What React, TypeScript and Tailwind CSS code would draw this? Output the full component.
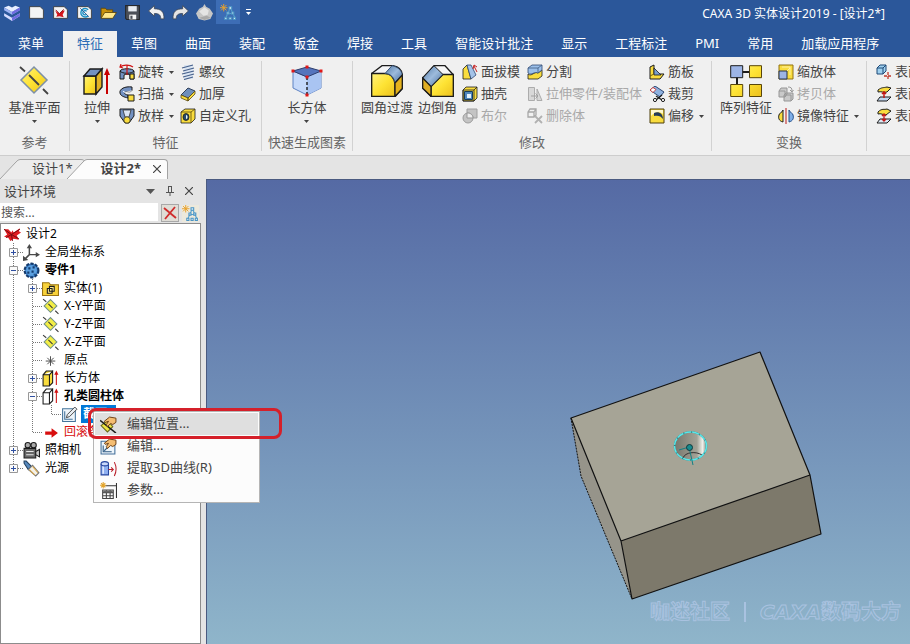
import type { ReactNode } from 'react'

interface IconProps {
  size?: number
  box?: number
  children: ReactNode
}

function Icon({ size = 17, box = 16, children }: IconProps) {
  return (
    <svg width={size} height={size} viewBox={`0 0 ${box} ${box}`} fill="none" className="shrink-0" aria-hidden="true">
      {children}
    </svg>
  )
}

const K = '#1c1c1c'
const Y = '#f9dc3e'
const B = '#7391c2'

function Caret({ dim = false }: { dim?: boolean }) {
  return (
    <svg width="5" height="3" viewBox="0 0 5 3" className="shrink-0" aria-hidden="true">
      <path d="M0 0h5L2.500 3z" fill={dim ? '#fff' : '#444'} />
    </svg>
  )
}

/* ---------- quick access icons ---------- */

const Page = () => <path d="M1.500 2.500h10l3 3v8h-13z" fill="#f4f4f4" stroke="#3b3b3b" strokeWidth=".8" />

const HierarchyShape = () => (
  <>
    <path d="M9.500 4L5.500 13M10 4l4 9M7.500 9h4.500" stroke="#56a0cc" />
    <path d="M8.500 2.500h2.500v2.500H8.500zM6.500 7.500h2v2h-2zM11 7.500h2v2h-2zM4.500 12.500h2v2h-2zM8.500 12.500h2v2h-2zM12.500 12.500h2v2h-2z" fill="#e3f2f9" stroke="#4a94c4" />
    <path d="M3.500 0v7M0 3.500h7M1 1l5 5M6 1L1 6" stroke="#e8a22c" strokeWidth=".9" />
  </>
)

const quickTools: { name: string; active?: boolean; icon: ReactNode }[] = [
  { name: '新建', icon: <Page /> },
  {
    name: '新建设计',
    icon: (
      <>
        <Page />
        <path d="M3 6l4 3 3-3 2 0-2 4 1 2.500-4-1-3 .5 1-2z" fill="#d3141b" />
        <path d="M3.500 5.500L7 9l4-4" stroke="#8d0e12" strokeWidth=".8" />
      </>
    ),
  },
  {
    name: '新建图纸',
    icon: (
      <>
        <Page />
        <path d="M11.500 5.500a4 4 0 1 0 0 5.500M10 7a2 2 0 1 0 0 2.500" stroke="#1b8fc4" strokeWidth="1.300" />
        <path d="M4 4l8 8" stroke="#2f5f97" strokeWidth=".9" />
      </>
    ),
  },
  {
    name: '打开',
    icon: (
      <>
        <path d="M1 13V4h4l1.500 1.500H12V8" fill="#c9920c" stroke="#5d4407" strokeWidth=".8" />
        <path d="M1 13.500L4.500 8h11L12 13.500z" fill="#ffe88a" stroke="#5d4407" strokeWidth=".8" />
      </>
    ),
  },
  {
    name: '保存',
    icon: (
      <>
        <path d="M1.500 1.500h13v13h-12l-1-1z" fill="#4b4f57" stroke="#26282c" />
        <path d="M4 2h8v5H4z" fill="#e9edf2" />
        <path d="M5 10h6.500v4.500H5z" fill="#f5f5f5" />
        <path d="M6 11h2v3H6z" fill="#4b4f57" />
      </>
    ),
  },
  {
    name: '撤销',
    icon: <path d="M.5 6.500L6 1.500v3c6 0 9.500 2.500 9 9.500h-3c0-3.500-1.500-5-6-5v2.500z" fill="#f1f1f1" stroke="#3b4656" strokeWidth=".8" />,
  },
  {
    name: '重做',
    icon: <path d="M15.500 6.500L10 1.500v3C4 4.500.5 7 1 14h3c0-3.500 1.500-5 6-5v2.500z" fill="#e4e4e4" stroke="#3b4656" strokeWidth=".8" />,
  },
  {
    name: '渲染',
    icon: (
      <>
        <path d="M8 0l1.500 2.500L13 4.500l3 4.500-2.500 5L8 15.500 2.500 14 0 9l3-4.500 3.500-2z" fill="#c6c6c6" />
        <path d="M8 3l4 3-1 4-4 1-4-4z" fill="#e4e4e4" />
        <path d="M10 11l4 2-6 2-5-2z" fill="#a9a9a9" />
      </>
    ),
  },
  { name: '设计树', active: true, icon: <HierarchyShape /> },
]

/* ---------- ribbon icons ---------- */

const PlaneShape = () => (
  <>
    <path d="M16 2l13 13-13 13L3 15z" fill="url(#gold)" stroke="#7d90a8" strokeWidth="1.500" />
    <path d="M2 2l5 4.500M11 10l10 10M25 24l5 5" stroke="#444" strokeWidth="1.800" />
  </>
)

const ExtrudeShape = () => (
  <>
    <path d="M3 11h12v18H3z" fill="url(#gold)" stroke={K} strokeWidth="1.400" />
    <path d="M3 11l6-7h12l-6 7z" fill={B} stroke={K} strokeWidth="1.400" />
    <path d="M15 11l6-7v18l-6 7z" fill="#e2b224" stroke={K} strokeWidth="1.400" />
    <path d="M26 29V8" stroke="#c80000" strokeWidth="2" />
    <path d="M26 3l3 7h-6z" fill="#c80000" />
  </>
)

const CubeShape = () => (
  <>
    <path d="M2 6v17l14 7 14-7V6l-14 6z" fill="#c5d9fa" stroke="#5f83c3" />
    <path d="M16 12l14-6v17l-14 7z" fill="#a9c4f2" />
    <path d="M2 6l14-4 14 4-14 6z" fill="#5574bd" stroke="#2d3e6e" />
    <path d="M16 12v18" stroke={K} strokeDasharray="3 2" strokeWidth="1.400" />
    <path d="M14.500 .5h3v3h-3zM.5 4.500h3v3h-3zM28.500 4.500h3v3h-3zM14.500 10.500h3v3h-3zM14.500 28.500h3v3h-3z" fill="#e01818" />
  </>
)

const FilletShape = () => (
  <>
    <path d="M.7 8.500L11 .7h11c5 1 9 4 9.300 9v14l-7 7.600H.7z" fill="#f4f5f7" stroke={K} strokeWidth="1.300" />
    <path d="M.7 8.500H14c6 0 9 5 10 10v13H.7z" fill="url(#gold)" stroke={K} strokeWidth="1.300" />
    <path d="M14 8.500L21 .7c6 1 9.500 5 10.300 9l-7.300 8C23 13 20 8.500 14 8.500z" fill="url(#steel)" stroke="#354f72" />
    <path d="M24 18l7.300-8v13.500l-7.300 8z" fill="#e4b21d" stroke={K} strokeWidth="1.300" />
  </>
)

const ChamferShape = () => (
  <>
    <path d="M.7 13L12 .7h11l8.300 9v21.600H9l-8.300-8z" fill="#f6f6f6" stroke={K} strokeWidth="1.300" />
    <path d="M9 21.500l12-12h10.300v21.800H9z" fill="url(#gold)" stroke={K} strokeWidth="1.300" />
    <path d="M.7 13L12 .7l9 8.800-12 12z" fill="url(#steel)" stroke={K} />
    <path d="M.7 13l8.300 8.500v9.800l-8.300-8z" fill="#dfae24" stroke={K} strokeWidth="1.300" />
  </>
)

const PatternShape = () => (
  <>
    <path d="M7 7h18M7 7v18" stroke={K} strokeWidth="2" />
    <path d="M.7 .7h12v12H.7z" fill="#9db5e6" stroke={K} />
    <path d="M19.500 .7h12v12h-12zM.7 19.500h12v12H.7zM19.500 19.500h12v12h-12z" fill="url(#gold)" stroke="#57450b" />
  </>
)

const small: Record<string, ReactNode> = {
  revolve: (
    <>
      <path d="M1 7c1-3 13-3 14 0v8h-4v-4c-1-1-5-1-6 0v4H1z" fill={B} stroke={K} />
      <path d="M1 7c2 3 12 3 14 0" stroke={K} />
      <path d="M11 10h4v5h-4z" fill={Y} stroke={K} />
      <path d="M14 3C10 0 4 1 1 3m1-3L1 3l3 1M8 1v10" stroke="#d01414" strokeWidth="1.200" />
    </>
  ),
  sweep: (
    <>
      <path d="M13 1C6 0 0 3 1 7c.5 3 4 4 8 5V9C6 8.500 5 7.500 6 6.500 7 5 13 7 13 4z" fill={B} stroke={K} />
      <path d="M4 5c2 3 6 0 9 0" stroke="#fff" />
      <path d="M9 9h6v6H9z" fill={Y} stroke={K} />
    </>
  ),
  loft: (
    <>
      <path d="M1 1h14v7l-5 7H6L1 8z" fill={B} stroke={K} />
      <path d="M4 2h8l-2 7H6z" fill="#dbe5f4" stroke={K} strokeWidth=".7" />
      <circle cx="8" cy="12" r="3.200" fill={Y} stroke={K} strokeWidth=".7" />
    </>
  ),
  thread: (
    <>
      <path d="M4 1h9v14H4z" fill="#dbe5f2" />
      <path d="M2 4l11-3M3 7l11-3M2 10l12-3M3 13l11-3M4 15.500l9-2.500" stroke="#46608a" strokeWidth="1.200" />
    </>
  ),
  thicken: (
    <>
      <path d="M1 9l7-7 7 3-7 7z" fill="#6e8ebb" stroke="#303f59" />
      <path d="M1 9l7 3v3l-7-3zM8 12l7-7v3l-7 7z" fill={Y} stroke="#5a4a12" strokeWidth=".8" />
    </>
  ),
  hole: (
    <>
      <path d="M1 4l4-3h10v10l-4 4H1z" fill={Y} stroke={K} strokeWidth=".8" />
      <path d="M1 4h10v11M11 4l4-3" stroke="#59470a" strokeWidth=".8" />
      <ellipse cx="6" cy="9" rx="3" ry="3.500" fill="#274969" stroke={K} strokeWidth=".8" />
      <path d="M6 7c2 0 2 4 0 4" fill="#e8f4f8" />
    </>
  ),
  draft: (
    <>
      <path d="M1 5l4-4 4 14H1z" fill={Y} stroke={K} strokeWidth=".8" />
      <path d="M5 1h4l5 10-5 4z" fill="#a4c3e8" stroke="#2d4772" strokeWidth=".8" />
      <path d="M15 8l-3-6m-1 3l1-4 3 2" stroke="#c62020" />
    </>
  ),
  shell: (
    <>
      <path d="M1 4l3-3h11v11l-3 3H1z" fill={Y} stroke={K} strokeWidth=".8" />
      <path d="M1 4h11v11H1zM12 4l3-3" stroke={K} strokeWidth=".8" />
      <path d="M2.500 5.500h8v8h-8z" fill="#4f87bc" stroke="#173a5c" />
      <path d="M5 8h4v4H5z" fill="#e4f0fa" />
    </>
  ),
  boolean: (
    <>
      <path d="M5 1h10v9H5z" fill="#c4c4c4" stroke="#a0a0a0" />
      <circle cx="6" cy="10" r="5" fill="#c4c4c4" stroke="#9c9c9c" />
      <path d="M5 5c4 0 6 2 6 5H5z" fill="#eee" stroke="#999" />
    </>
  ),
  split: (
    <>
      <path d="M1 10c4 3 6-3 10-1l4-3v6l-4 3H1z" fill={Y} stroke={K} strokeWidth=".8" />
      <path d="M1 4l4-3h10v5l-4 3C7 7 5 12 1 9z" fill="#9cc0ea" stroke="#2d4772" strokeWidth=".8" />
      <path d="M1 4h10l4-3M11 4v4" stroke="#405c82" strokeWidth=".8" />
    </>
  ),
  stretch: (
    <>
      <path d="M1.500 1.500h6v13h-6zM10 3l5 11.500h-5z" fill="#d8d8d8" stroke="#acacac" />
      <path d="M4 10h7M8.500 7.500L11 10l-2.500 2.500" stroke="#a0a0a0" />
    </>
  ),
  remove: (
    <>
      <path d="M1 4l2-3h6v6L7 9H1zM1 4h6v5M7 4l2-3" stroke="#a7a7a7" strokeWidth="1.300" />
      <path d="M8 8l7 7M15 8l-7 7" stroke="#b1b1b1" strokeWidth="1.800" />
    </>
  ),
  rib: (
    <>
      <path d="M1 3l4-2v9h10l-4 5H1z" fill={Y} stroke={K} />
      <path d="M5 4l7 7H5z" fill="#799ecd" stroke={K} strokeWidth=".8" />
      <path d="M1 12l4-2" stroke="#77620e" />
    </>
  ),
  trim: (
    <>
      <path d="M1 4l5-4 9 6-4 5z" fill="#8eb1df" stroke="#2d4772" />
      <path d="M1 4l3-2.500 3 2-3 3z" fill="#fff" stroke="#c84444" />
      <path d="M7 10l6 4M13 9l-6 5" stroke={K} strokeWidth="1.300" />
      <circle cx="6" cy="14" r="1.600" fill="#fff" stroke={K} />
      <circle cx="14" cy="14" r="1.600" fill="#fff" stroke={K} />
    </>
  ),
  offset: (
    <>
      <path d="M1 1h14v14H1z" fill={Y} stroke="#4c3f0c" />
      <path d="M2 8V2h12v4C11 3 5 4 2 8z" fill="#fff8d0" />
      <path d="M5 5c5-2 9 1 9 6-2-3-5-4-9-3z" fill="#253b58" />
    </>
  ),
  scale: (
    <>
      <path d="M1 1h14v14H1z" fill={Y} stroke="#927310" />
      <path d="M1 7h8v8H1z" fill="#9db4e3" stroke="#25334d" />
      <path d="M9 7l3-3M4 3h8v8" stroke="#fff0a0" />
    </>
  ),
  copy: (
    <>
      <path d="M1 5l2-3h6v6l-2 3H1zM6 9l2-2h7v6l-2 2H6z" fill="#c9c9c9" stroke="#969696" />
      <path d="M1 5h6v6M6 9h7v6M10 1c3 0 4 1 4 4m-2-1l2 2 1.500-2" stroke="#989898" />
    </>
  ),
  mirror: (
    <>
      <path d="M5 2v12c-4-1-5-4-4-7 0-2 3-2 4-5z" fill={Y} stroke={K} />
      <path d="M11 2v12c4-1 5-4 4-7 0-2-3-2-4-5z" fill="#80afe8" stroke="#24508a" />
      <path d="M8 0v16" stroke="#b91a1a" />
    </>
  ),
  moveFace: (
    <>
      <path d="M1 4l3-3h6v6l-3 3H1z" fill="#9fd0ef" stroke="#1c4977" />
      <path d="M1 4h6v6M7 4l3-3" stroke="#1c4977" />
      <path d="M12 8v8M8 12h8" stroke="#c0392b" strokeDasharray="3 1" strokeWidth="1.300" />
    </>
  ),
  matchFace: (
    <>
      <path d="M2 4c4-3 5-2 9-3l4 1-4 4c-3 1-6-1-9 0z" fill={Y} stroke={K} />
      <path d="M4 11h11l-4 4H1z" fill="#c0d6ef" stroke={K} />
      <path d="M8 5v7M6 8l2-2 2 2" stroke="#c21616" strokeWidth="1.500" />
    </>
  ),
  alignFace: (
    <>
      <path d="M2 4c4-4 6-2 9-3l4 2-5 4c-3 0-5-2-8-1z" fill={Y} stroke={K} />
      <path d="M4 11h11l-4 4H1z" fill="#dce8f4" stroke={K} />
      <path d="M8 6v6M6 8l2-2 2 2M6 11l2 2 2-2" stroke="#c21616" strokeWidth="1.300" />
    </>
  ),
}

/* ---------- tree and menu icons ---------- */

const Extrude16 = ({ fill }: { fill: string }) => (
  <>
    <path d="M1 4.500h6v10.500H1zM7 4.500L10 1v11l-3 3M1 4.500L4 1h6" fill={fill} stroke={K} />
    <path d="M13.500 14V3" stroke="#cf1010" />
    <path d="M13.500 .5l2 4h-4z" fill="#cf1010" />
  </>
)

const Plane16 = () => (
  <>
    <path d="M8 1.500l6 6-6 6-6-6z" fill="#f3ee45" stroke="#71918a" />
    <path d="M1 1l3 2.500M6 5.500l4 4M12.500 12l3 3" stroke="#3c3c3c" />
  </>
)

const Hand = () => (
  <path d="M4 5l5-4 6 1v4l-3 2-2-1-3 3-1-2 2-3-3 1z" fill="#f4bd72" stroke="#6b3d12" strokeWidth=".9" />
)

const treeIcons: Record<string, ReactNode> = {
  design: (
    <>
      <path d="M0 3l4 0 3 3 1-2 1 2 6-4-1 3 2 1-4 3 2 4-5-1-3 2-2-3-4-1 3-2z" fill="#e01b20" />
      <path d="M0 3l7 5 8-5M7 8l1 6M2 11l5-3 7 4" stroke="#720c10" strokeWidth=".9" />
    </>
  ),
  axes: (
    <>
      <path d="M6 3v7h8M6 10l-4 4" stroke="#4a4a4a" strokeWidth="1.400" />
      <path d="M6 0l2.500 4h-5zM16 10l-4 2.500v-5zM0 16v-5l5 4z" fill="#4a4a4a" />
    </>
  ),
  part: (
    <>
      <circle cx="8" cy="8" r="6.500" fill="#3d82cb" stroke="#163b6c" strokeWidth="2" strokeDasharray="3 1.200" />
      <circle cx="8" cy="8" r="5" fill="#5ca0df" />
      <path d="M5 5h2v2H5zM9 4h2v2H9zM8 8h2v2H8zM4 9h2v2H4zM10 11h2v1h-2z" fill="#153e73" />
    </>
  ),
  folder: (
    <>
      <path d="M.5 14.500v-12h6l1.500 2h7.500v10z" fill="#f8d23a" stroke="#9b7412" />
      <path d="M5 8h4.500v4.500H5zM7 6h4.500v4.500H7z" fill="#fbe88a" stroke={K} />
    </>
  ),
  plane: <Plane16 />,
  origin: <path d="M8 4v9M3.500 8.500h9M5 5.500l6 6M11 5.500l-6 6" stroke="#4a4a4a" strokeWidth=".9" />,
  solid: <Extrude16 fill={Y} />,
  cavity: <Extrude16 fill="#fff" />,
  sketch: (
    <>
      <path d="M1.500 2.500h12v12h-12z" fill="#eef5fb" stroke="#44749b" />
      <path d="M3.500 5v7.500H11" stroke="#44749b" />
      <path d="M5 11l1-3 7-7 2 2-7 7z" fill="#e8eef2" stroke="#444" strokeWidth=".9" />
    </>
  ),
  arrow: <path d="M3 7h6V4l6 4.500L9 13v-3H3z" fill="#d80e0e" />,
  camera: (
    <>
      <circle cx="4.500" cy="3" r="2.500" fill="#aaa" stroke={K} />
      <circle cx="10" cy="3" r="2.500" fill="#aaa" stroke={K} />
      <path d="M1 6h11v9H1z" fill="#666" stroke={K} />
      <path d="M3 9h7M3 12h7" stroke="#e8e8e8" />
      <path d="M12 9l3.500-2v7L12 12z" fill="#ccc" stroke={K} />
    </>
  ),
  light: (
    <>
      <path d="M1 1h2l5 5-3 3-4-6z" fill="#5889bd" stroke="#23415f" />
      <path d="M5 9l4-4 6 7-3 3z" fill="#f4f2ea" stroke="#777" />
      <path d="M9 6l5 6M6 9l5 5" stroke="#d9a84d" />
    </>
  ),
  editPosition: (
    <>
      <path d="M1 9l6-5 5 6-5 5z" fill="#eee543" stroke="#6b671b" />
      <path d="M0 4l15 12" stroke={K} strokeWidth="1.500" />
      <Hand />
    </>
  ),
  edit: (
    <>
      <path d="M1 3h13v12H1z" fill="#edf5fb" stroke="#426f9a" />
      <path d="M3 7v6h8M4 12l5-5" stroke="#2f5a83" />
      <Hand />
    </>
  ),
  curve: (
    <>
      <path d="M1 4v10h7V4z" fill="#8fb0f0" stroke="#2747a0" />
      <path d="M3 5v8" stroke="#dfe8ff" strokeWidth="1.500" />
      <ellipse cx="4.500" cy="3.500" rx="3.500" ry="2" fill="#c9d8fa" stroke="#2747a0" />
      <path d="M8 9h4M10.500 7l2 2-2 2M13.500 2c2 4 2 9 0 13" stroke="#b91f2a" />
    </>
  ),
  params: (
    <>
      <path d="M2.500 7.500h10v8h-10zM2.500 10h10M6 8v7M9.500 8v7M2.500 13h10" stroke="#444" />
      <path d="M3 8h9v2H3z" fill="#666" />
      <path d="M5 3.500h10M15.500 1v14" stroke="#333" />
      <path d="M3 0v6M0 3h6M1 1l4 4M5 1L1 5" stroke="#e3a42b" />
    </>
  ),
}

/* ---------- ribbon ---------- */

interface Tool {
  label: string
  icon: string
  menu?: boolean
  disabled?: boolean
}

function SmallTool({ label, icon, menu, disabled }: Tool) {
  return (
    <button
      type="button"
      disabled={disabled}
      className="flex h-[22px] items-center gap-[3px] whitespace-nowrap text-[#444] disabled:text-[#a9a9a9]"
    >
      <Icon size={16}>{small[icon]}</Icon>
      <span>{label}</span>
      {menu && <span className="pl-0.5"><Caret /></span>}
    </button>
  )
}

function ToolColumn({ tools }: { tools: Tool[] }) {
  return (
    <div className="flex shrink-0 flex-col items-start">
      {tools.map((t) => (
        <SmallTool key={t.label} {...t} />
      ))}
    </div>
  )
}

function LargeTool({ label, menu, children }: { label: string; menu?: boolean; children: ReactNode }) {
  return (
    <button type="button" className="flex shrink-0 flex-col items-center pt-1 whitespace-nowrap">
      <Icon size={32} box={32}>{children}</Icon>
      <span className="pt-px leading-[18px]">{label}</span>
      {menu && <span className="pt-1"><Caret /></span>}
    </button>
  )
}

function Group({ title, className, children }: { title?: string; className: string; children: ReactNode }) {
  return (
    <section className={`my-1 flex shrink-0 flex-col border-r border-[#d2d2d2] ${className}`}>
      <div className="flex h-[72px] items-start">{children}</div>
      <h2 className="text-center leading-[18px] text-[#666]">{title}</h2>
    </section>
  )
}

function Ribbon() {
  return (
    <div className="flex h-[99px] shrink-0 overflow-hidden border-b border-[#cdcdcd] bg-[#f0f0f0] text-[13px] text-[#444]">
      <Group title="参考" className="w-[70px]">
        <div className="flex w-full justify-center">
          <LargeTool label="基准平面" menu><PlaneShape /></LargeTool>
        </div>
      </Group>
      <Group title="特征" className="w-48">
        <div className="flex gap-1.5 pl-[11px]">
          <LargeTool label="拉伸" menu><ExtrudeShape /></LargeTool>
          <ToolColumn
            tools={[
              { label: '旋转', icon: 'revolve', menu: true },
              { label: '扫描', icon: 'sweep', menu: true },
              { label: '放样', icon: 'loft', menu: true },
            ]}
          />
          <ToolColumn
            tools={[
              { label: '螺纹', icon: 'thread' },
              { label: '加厚', icon: 'thicken' },
              { label: '自定义孔', icon: 'hole' },
            ]}
          />
        </div>
      </Group>
      <Group title="快速生成图素" className="w-[91px]">
        <div className="flex w-full justify-center">
          <LargeTool label="长方体" menu><CubeShape /></LargeTool>
        </div>
      </Group>
      <Group title="修改" className="w-[359px]">
        <div className="flex gap-[5px] pl-2">
          <LargeTool label="圆角过渡"><FilletShape /></LargeTool>
          <LargeTool label="边倒角"><ChamferShape /></LargeTool>
          <div className="flex gap-[7px]">
            <ToolColumn
              tools={[
                { label: '面拔模', icon: 'draft' },
                { label: '抽壳', icon: 'shell' },
                { label: '布尔', icon: 'boolean', disabled: true },
              ]}
            />
            <ToolColumn
              tools={[
                { label: '分割', icon: 'split' },
                { label: '拉伸零件/装配体', icon: 'stretch', disabled: true },
                { label: '删除体', icon: 'remove', disabled: true },
              ]}
            />
            <ToolColumn
              tools={[
                { label: '筋板', icon: 'rib' },
                { label: '裁剪', icon: 'trim' },
                { label: '偏移', icon: 'offset', menu: true },
              ]}
            />
          </div>
        </div>
      </Group>
      <Group title="变换" className="w-[155px]">
        <div className="flex gap-1.5 pl-2">
          <LargeTool label="阵列特征"><PatternShape /></LargeTool>
          <ToolColumn
            tools={[
              { label: '缩放体', icon: 'scale' },
              { label: '拷贝体', icon: 'copy', disabled: true },
              { label: '镜像特征', icon: 'mirror', menu: true },
            ]}
          />
        </div>
      </Group>
      <Group className="w-40 pl-[9px]">
        <ToolColumn
          tools={[
            { label: '表面移动', icon: 'moveFace' },
            { label: '表面匹配', icon: 'matchFace' },
            { label: '表面等距', icon: 'alignFace' },
          ]}
        />
      </Group>
    </div>
  )
}

const menuTabs = ['菜单', '特征', '草图', '曲面', '装配', '钣金', '焊接', '工具', '智能设计批注', '显示', '工程标注', 'PMI', '常用', '加载应用程序']

function TitleBar() {
  return (
    <header className="shrink-0 bg-[#2b579a] text-[13px] text-white">
      <div className="flex h-[31px] items-start justify-between">
        <div className="flex items-center">
          <span className="flex w-6 justify-center">
            <Icon size={18}>
              <path d="M1 4l7 4 7-4-4-1.500L8 4 5 2.500z" fill="#e9efff" />
              <path d="M1 4v2.500l7 4 7-4V4L8 8z" fill="#9fb4f4" />
              <path d="M1 9v2.500L8 16l7-4.500V9l-7 4z" fill="#d5dcff" />
              <path d="M8 8v2.500l7-4V4zM8 13v3l7-4.500V9z" fill="#6f6be0" />
            </Icon>
          </span>
          {quickTools.map((t) => (
            <button
              key={t.name}
              type="button"
              aria-label={t.name}
              className={`flex h-6 w-6 items-center justify-center ${t.active ? 'bg-[#3d6db5]' : ''}`}
            >
              <Icon>{t.icon}</Icon>
            </button>
          ))}
          <button type="button" aria-label="自定义快速访问工具栏" className="flex flex-col items-center gap-0.5 px-1.5">
            <span className="h-px w-[5px] bg-white" />
            <Caret dim />
          </button>
        </div>
        <h1 className="pt-1 pr-[25px] text-[12px] leading-5">CAXA 3D 实体设计2019 - [设计2*]</h1>
      </div>
      <nav className="flex h-[26px] items-stretch overflow-hidden whitespace-nowrap">
        {menuTabs.map((name, i) => (
          <button
            key={name}
            type="button"
            className={
              i === 0 ? 'pr-[19px] pl-[18px]' : name === '特征' ? 'bg-[#f0f0f0] px-3.5 text-[#2b6cb5]' : 'px-3.5'
            }
          >
            {name}
          </button>
        ))}
      </nav>
    </header>
  )
}

/* ---------- document tabs ---------- */

function Slope({ fill }: { fill: string }) {
  return (
    <svg width="20" height="20" viewBox="0 0 20 20" className="shrink-0" aria-hidden="true">
      <path d="M0 20L16 3q2-2.500 4-2.500V20z" fill={fill} />
      <path d="M0 20L16 3q2-2.500 4-2.500" fill="none" stroke="#a3a3a3" />
    </svg>
  )
}

function DocumentTabs() {
  return (
    <div className="flex h-[23px] shrink-0 items-end bg-[#e4e4e4] text-[13px] text-[#444]">
      <button type="button" className="flex h-5">
        <Slope fill="#ececec" />
        <span className="rounded-tr border-t border-[#a3a3a3] bg-[#ececec] px-3 leading-[16px]">设计1*</span>
      </button>
      <div className="-ml-[18px] flex h-5">
        <Slope fill="#fcfcfc" />
        <div className="flex items-start gap-3 rounded-tr border-t border-r border-[#a3a3a3] bg-[#fcfcfc] pr-1.5 pl-3.5">
          <button type="button" className="leading-[16px] font-bold">设计2*</button>
          <button type="button" aria-label="关闭" className="flex h-[18px] items-center">
            <svg width="8" height="8" viewBox="0 0 8 8"><path d="M0 0l8 8M8 0L0 8" stroke="#444" strokeWidth="1.200" /></svg>
          </button>
        </div>
      </div>
    </div>
  )
}

/* ---------- design tree ---------- */

type Guide = 'line' | 'plus' | 'minus' | 'tee' | 'end' | 'lastPlus'

interface Node {
  label: string
  icon: string
  guides: Guide[]
  style?: 'bold' | 'selected' | 'rollback'
}

const nodes: Node[] = [
  { label: '设计2', icon: 'design', guides: [] },
  { label: '全局坐标系', icon: 'axes', guides: ['plus'] },
  { label: '零件1', icon: 'part', guides: ['minus'], style: 'bold' },
  { label: '实体(1)', icon: 'folder', guides: ['line', 'plus'] },
  { label: 'X-Y平面', icon: 'plane', guides: ['line', 'tee'] },
  { label: 'Y-Z平面', icon: 'plane', guides: ['line', 'tee'] },
  { label: 'X-Z平面', icon: 'plane', guides: ['line', 'tee'] },
  { label: '原点', icon: 'origin', guides: ['line', 'tee'] },
  { label: '长方体', icon: 'solid', guides: ['line', 'plus'] },
  { label: '孔类圆柱体', icon: 'cavity', guides: ['line', 'minus'], style: 'bold' },
  { label: '截面1', icon: 'sketch', guides: ['line', 'line', 'end'], style: 'selected' },
  { label: '回滚条', icon: 'arrow', guides: ['line', 'end'], style: 'rollback' },
  { label: '照相机', icon: 'camera', guides: ['plus'] },
  { label: '光源', icon: 'light', guides: ['lastPlus'] },
]

const labelStyles = {
  bold: 'font-bold',
  selected: 'bg-[#0078d7] font-bold text-white',
  rollback: 'text-[#d80e0e]',
}

function GuideCell({ kind }: { kind: Guide }) {
  const half = kind === 'end' || kind === 'lastPlus'
  const box = kind === 'plus' || kind === 'minus' || kind === 'lastPlus'
  return (
    <svg width="19" height="18" viewBox="0 0 19 18" className="shrink-0" aria-hidden="true">
      <path d={half ? 'M9.500 0v9' : 'M9.500 0v18'} stroke="#777" strokeDasharray="1 1" />
      {kind !== 'line' && <path d="M10 9.500h9" stroke="#777" strokeDasharray="1 1" />}
      {box && (
        <>
          <path d="M5.500 5.500h8v8h-8z" fill="#fbfbfb" stroke="#989898" />
          <path d={kind === 'minus' ? 'M7 9.500h5' : 'M7 9.500h5M9.500 7v5'} stroke="#2f4fa0" />
        </>
      )}
    </svg>
  )
}

function DesignTree() {
  return (
    <ul className="min-h-0 flex-1 overflow-hidden border border-[#8c8c8c] bg-white pt-px pl-[3px] text-[12px] text-black">
      {nodes.map((n) => (
        <li key={n.label} className="flex h-[18px] items-center whitespace-nowrap">
          {n.guides.map((g, i) => (
            <GuideCell key={i} kind={g} />
          ))}
          <Icon>{treeIcons[n.icon]}</Icon>
          <span className={`ml-[3px] px-0.5 leading-[18px] ${n.style ? labelStyles[n.style] : ''}`}>{n.label}</span>
        </li>
      ))}
    </ul>
  )
}

function DesignPanel() {
  return (
    <aside className="flex w-[201px] shrink-0 flex-col bg-[#e4e4e4] text-[#444]">
      <div className="flex h-6 items-center gap-[11px] pr-2 pl-1 text-[13px]">
        <h2 className="flex-1 leading-[20px]">设计环境</h2>
        <button type="button" aria-label="菜单">
          <svg width="9" height="5" viewBox="0 0 9 5"><path d="M0 0h9L4.500 5z" fill="#555" /></svg>
        </button>
        <button type="button" aria-label="固定">
          <svg width="8" height="10" viewBox="0 0 8 10" fill="none" stroke="#555">
            <path d="M2 .5h4M2.500 0v6M5.500 0v6M0 6.500h8M4 7v3" />
          </svg>
        </button>
        <button type="button" aria-label="关闭">
          <svg width="8" height="8" viewBox="0 0 8 8"><path d="M0 0l8 8M8 0L0 8" stroke="#444" strokeWidth="1.200" /></svg>
        </button>
      </div>
      <div className="flex h-5 items-center gap-[3px] pr-0.5">
        <input
          aria-label="搜索"
          placeholder="搜索..."
          className="h-[18px] min-w-0 flex-1 self-start bg-white pl-px text-[12px] leading-[16px] placeholder:text-[#555]"
        />
        <button type="button" aria-label="清除" className="flex h-[18px] w-[18px] items-center justify-center border border-[#a8a8a8] bg-[#e0ddd6]">
          <svg width="14" height="14" viewBox="0 0 14 14"><path d="M1 2l12 10M12 1L2 13" stroke="#cf2c2c" strokeWidth="1.800" /></svg>
        </button>
        <button type="button" aria-label="设计树" className="bg-[#ede9dc]"><Icon>{<HierarchyShape />}</Icon></button>
      </div>
      <DesignTree />
    </aside>
  )
}

/* ---------- 3D view ---------- */

function Model() {
  return (
    <svg width="256" height="252" viewBox="568 350 256 252" className="absolute top-[170px] left-[361px]" aria-label="零件1">
      <path d="M571 418l50 123 11 58-51-123z" fill="#96948a" />
      <path d="M571 418l189-66 50 123-189 66z" fill="#a6a496" />
      <path d="M621 541l189-66 11 59-189 65z" fill="#7d796b" />
      <path d="M571 418l189-66 50 123-189 66zM621 541l11 58 189-65-11-59" fill="none" stroke="#111" strokeWidth="1.200" strokeLinejoin="round" />
      <path d="M571 418l10 58 51 123" fill="none" stroke="#111" strokeDasharray="2 1" />
      <ellipse cx="690.500" cy="446" rx="16" ry="14" fill="url(#bore)" />
      <path d="M683 458c2-6 13-7 19-3" fill="none" stroke="#333" />
      <ellipse cx="690.500" cy="446" rx="16" ry="14" fill="none" stroke="#2a8588" strokeWidth="1.500" />
      <ellipse cx="690.500" cy="446" rx="16" ry="14" fill="none" stroke="#5ce6e8" strokeWidth="1.500" strokeDasharray="7 1" />
      <path d="M679 450l10-3 4 18" fill="none" stroke="#128084" />
      <circle cx="689.500" cy="447.500" r="3" fill="#168a8e" stroke="#12393b" />
    </svg>
  )
}

function Viewport() {
  return (
    <main className="relative min-w-0 flex-1 overflow-hidden border-t border-l border-[#4a5a80] bg-linear-to-b from-[#556aa4] to-[#8fb5ca]">
      <Model />
      <p className="absolute right-[9px] bottom-[18px] flex items-center text-[20px] leading-[28px] font-bold whitespace-nowrap text-transparent [-webkit-text-stroke:1px_#a9c2e0]">
        <span>咖迷社区</span>
        <span className="mx-3.5 h-5 w-0.5 bg-[#a9c2e0]" />
        <span className="font-['DejaVu_Sans','Noto_Sans_CJK_SC',sans-serif]"><i>CAXA</i>数码大方</span>
      </p>
    </main>
  )
}

const menuItems = [
  { label: '编辑位置...', icon: 'editPosition' },
  { label: '编辑...', icon: 'edit' },
  { label: '提取3D曲线(R)', icon: 'curve' },
  { label: '参数...', icon: 'params' },
]

function ContextMenu() {
  return (
    <>
      <div role="menu" className="absolute top-[411px] left-[93px] flex w-[167px] flex-col border border-[#b5b5b5] bg-[#fcfcfc] p-px text-[13px] text-[#444]">
        {menuItems.map((m, i) => (
          <button
            key={m.label}
            type="button"
            role="menuitem"
            className={`flex h-[22px] items-center gap-2.5 pl-[5px] ${i === 0 ? 'bg-[#dfdfdf]' : ''}`}
          >
            <Icon>{treeIcons[m.icon]}</Icon>
            <span>{m.label}</span>
          </button>
        ))}
      </div>
      {/* callout around the highlighted entry */}
      <div className="pointer-events-none absolute top-[408px] left-[88px] h-[31px] w-[194px] rounded-lg border-3 border-[#d5202a]" />
    </>
  )
}

export default function App() {
  return (
    <div className="relative flex h-screen flex-col overflow-hidden bg-[#e4e4e4] font-['Noto_Sans','Noto_Sans_CJK_SC',sans-serif]">
      <svg width="0" height="0" className="absolute" aria-hidden="true">
        <defs>
          <linearGradient id="gold" x1="0" y1="0" x2="1" y2="1">
            <stop offset="0" stopColor="#fff27c" />
            <stop offset=".5" stopColor="#fee334" />
            <stop offset="1" stopColor="#ecc01c" />
          </linearGradient>
          <linearGradient id="steel" x1="0" y1="0" x2="1" y2="1">
            <stop offset="0" stopColor="#527aa8" />
            <stop offset=".5" stopColor="#9dbbdc" />
            <stop offset="1" stopColor="#426a9c" />
          </linearGradient>
          <linearGradient id="bore">
            <stop offset="0" stopColor="#77766c" />
            <stop offset=".7" stopColor="#a3a296" />
            <stop offset=".88" stopColor="#f0f0ea" />
            <stop offset="1" stopColor="#8a897e" />
          </linearGradient>
        </defs>
      </svg>
      <TitleBar />
      <Ribbon />
      <DocumentTabs />
      <div className="flex min-h-0 flex-1">
        <DesignPanel />
        <div className="w-[5px] shrink-0 bg-[#e4e4e4]" />
        <Viewport />
      </div>
      <ContextMenu />
    </div>
  )
}
